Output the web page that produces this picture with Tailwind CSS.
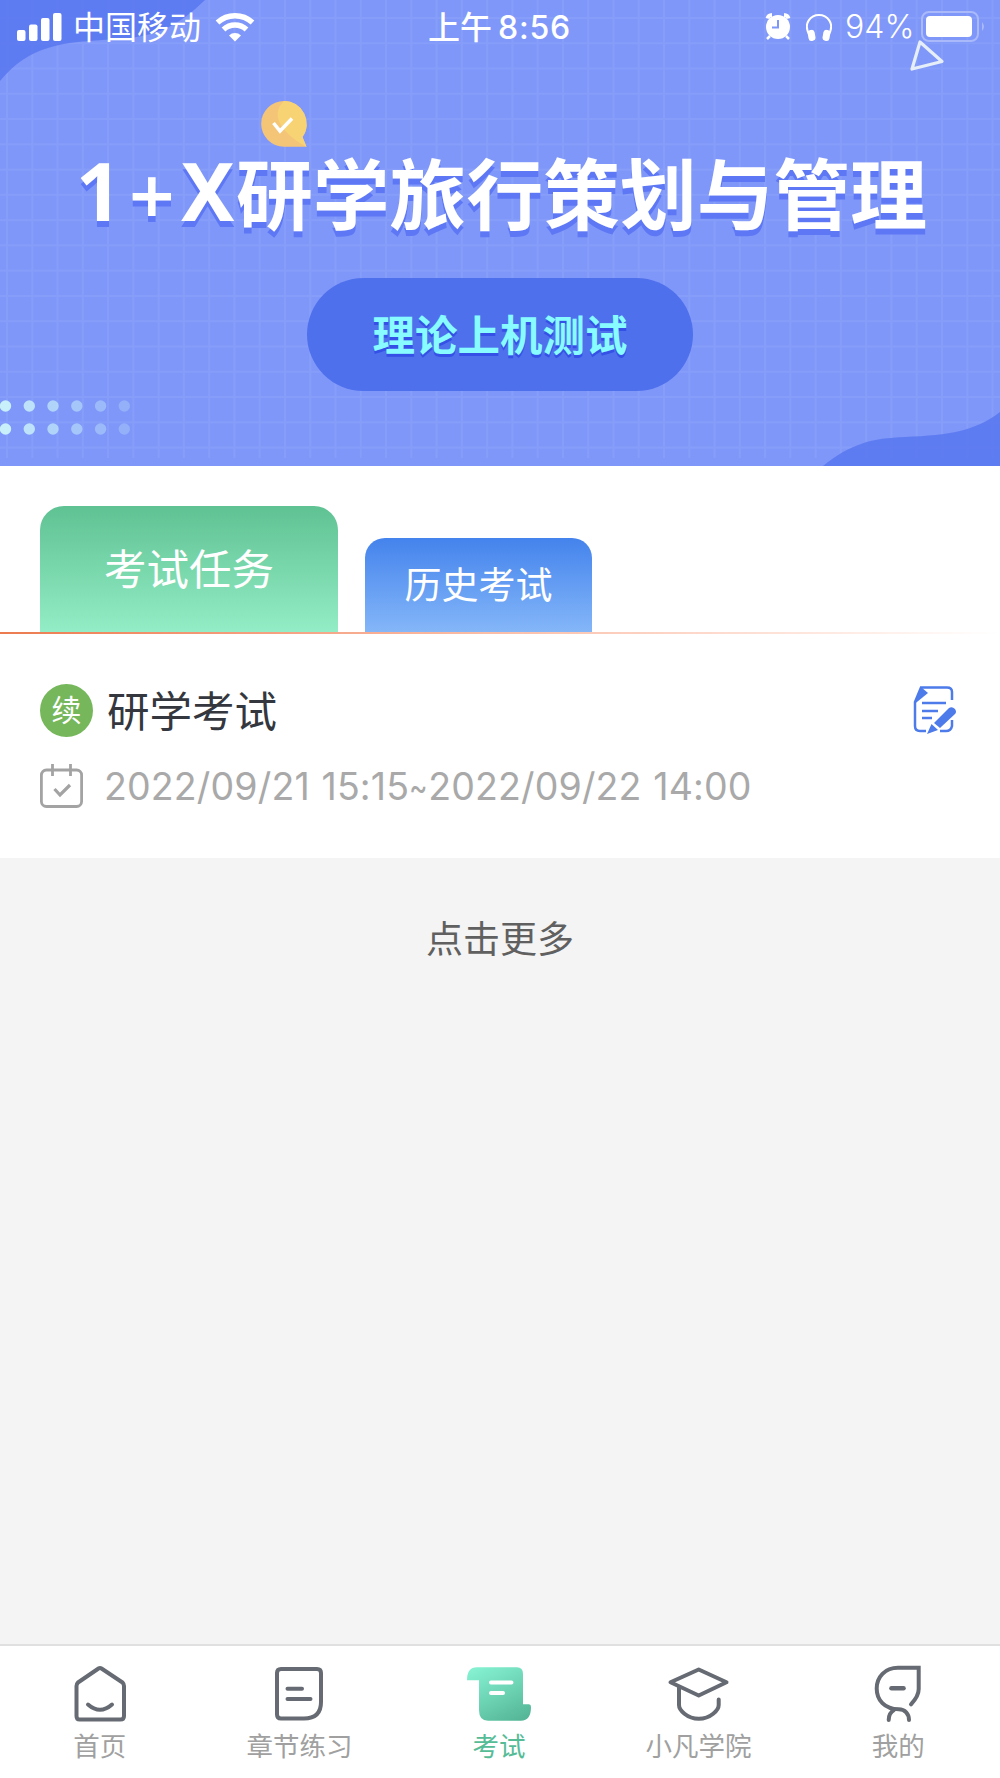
<!DOCTYPE html>
<html lang="zh-CN">
<head>
    <meta charset="UTF-8">
    <meta name="viewport" content="width=device-width, initial-scale=1.0">
    <title>1+X研学旅行策划与管理</title>
    <script src="https://cdn.jsdelivr.net/npm/@tailwindcss/browser@4"></script>
</head>
<body class="bg-[#f4f4f4] font-['Inter','Noto_Sans_CJK_SC',sans-serif]">
    <div id="app" class="flex flex-col w-[1000px] h-[1778px] overflow-hidden">

        <!-- banner -->
        <header class="relative h-[466px] shrink-0 bg-[#7f97f8] overflow-hidden">
            <svg class="absolute inset-0" width="1000" height="466" viewBox="0 0 1000 466" fill="none">
                <defs>
                    <pattern id="grid" x="6" y="17" width="25.27" height="25.27" patternUnits="userSpaceOnUse">
                        <path d="M1 0V25.27M0 1H25.27" stroke="#8ba2fa" stroke-width="2"/>
                    </pattern>
                </defs>
                <rect width="1000" height="458" fill="url(#grid)" opacity="0.6"/>
                <path d="M0 0H205C180 24 160 36 120 39C60 42 30 45 0 81Z" fill="#5c7af0" opacity=".94"/>
                <path d="M823 466C850 444 872 438 905 437C950 435 975 431 1000 412V466Z" fill="#5c7af0" opacity=".94"/>
                <!-- dots -->
                <g fill="#c8f0fb">
                    <g><circle cx="5.500" cy="406" r="5.700"/><circle cx="5.500" cy="429" r="5.700"/></g>
                    <g opacity=".85"><circle cx="29.300" cy="406" r="5.700"/><circle cx="29.300" cy="429" r="5.700"/></g>
                    <g opacity=".68"><circle cx="53" cy="406" r="5.700"/><circle cx="53" cy="429" r="5.700"/></g>
                    <g opacity=".53"><circle cx="76.800" cy="406" r="5.700"/><circle cx="76.800" cy="429" r="5.700"/></g>
                    <g opacity=".4"><circle cx="100.600" cy="406" r="5.700"/><circle cx="100.600" cy="429" r="5.700"/></g>
                    <g opacity=".28"><circle cx="124.300" cy="406" r="5.700"/><circle cx="124.300" cy="429" r="5.700"/></g>
                </g>
                <!-- check bubble -->
                <path d="M284 101A22.800 22.800 0 0 0 284 146.700H306.500L302.500 137A22.800 22.800 0 0 0 284 101Z" fill="#f5c577"/>
                <path d="M284 101C272 112 276 130 306.500 146.700L302.500 137A22.800 22.800 0 0 0 284 101Z" fill="#f8d374"/>
                <path d="M273.500 123L280 131L292 118.500" stroke="#fff" stroke-width="3.500"/>
                <path d="M920 42L942 61.500L912 69Z" stroke="#e6eef8" stroke-width="3.200" stroke-linejoin="round"/>
            </svg>

            <div class="relative flex items-center h-[54px] text-white text-[32px] leading-none">
                <svg class="ml-[17px]" width="45" height="30" viewBox="0 0 45 30" fill="#fff">
                    <rect x="0" y="18" width="8.500" height="11" rx="2"/>
                    <rect x="12" y="12.500" width="8.500" height="16.500" rx="2"/>
                    <rect x="24" y="6" width="8.500" height="23" rx="2"/>
                    <rect x="36" y="1" width="8.500" height="28" rx="2"/>
                </svg>
                <span class="ml-[11px] w-[128px] pt-[2px] whitespace-nowrap">中国移动</span>
                <svg class="ml-[14px]" width="41" height="30" viewBox="0 0 41 30" fill="none" stroke="#fff">
                    <path d="M2.500 10.500A26 26 0 0 1 37.500 10.500" stroke-width="5.500"/>
                    <path d="M8.500 17.500A17 17 0 0 1 31.500 17.500" stroke-width="5.500"/>
                    <path d="M20 29.500L14 23.500A8.500 8.500 0 0 1 26 23.500Z" fill="#fff" stroke="none"/>
                </svg>
                <span class="absolute left-[428px] flex items-center gap-[6px] pt-[2px] font-medium whitespace-nowrap">
                    <span>上午</span><span class="tracking-[0.8px]">8:56</span>
                </span>
                <div class="absolute left-[765px] flex items-center">
                    <svg width="26" height="28" viewBox="0 0 26 28" fill="none">
                        <circle cx="13" cy="14" r="12" fill="#fff"/>
                        <path d="M2.500 5.500A5 5 0 0 1 7 2M19 2A5 5 0 0 1 23.500 5.500" stroke="#fff" stroke-width="4"/>
                        <path d="M5 23L2 26M21 23L24 26" stroke="#fff" stroke-width="2.500"/>
                        <path d="M13 7V14.500H7" stroke="#7f97f8" stroke-width="2"/>
                    </svg>
                    <svg class="ml-[15px]" width="26" height="28" viewBox="0 0 26 28" fill="none">
                        <path d="M3 21C-3 10 5 2 13 2S29 10 23 21" stroke="#fff" stroke-width="2"/>
                        <rect x="2" y="17" width="7" height="11" rx="3" transform="rotate(-10 5 22)" fill="#fff"/>
                        <rect x="17" y="17" width="7" height="11" rx="3" transform="rotate(10 21 22)" fill="#fff"/>
                    </svg>
                    <span class="ml-[13px] w-[70px] text-[32px] font-light whitespace-nowrap">94%</span>
                    <svg class="ml-[6px]" width="64" height="32" viewBox="0 0 64 32" fill="none">
                        <rect x="1" y="1" width="56" height="29" rx="7" stroke="#a9b9fa" stroke-width="2"/>
                        <rect x="5" y="5" width="46" height="21" rx="4" fill="#fff"/>
                        <path d="M61 11Q65 15.500 61 20Z" fill="#a9b9fa"/>
                    </svg>
                </div>
            </div>

            <h1 class="relative flex items-center mt-[87px] ml-[76px] h-[110px] text-white text-[76.800px] leading-none font-bold whitespace-nowrap [text-shadow:0_6px_0_#5e78f5]">
                <span class="w-[53px] pb-[12px] text-[80px] font-['Noto_Sans']">1</span>
                <span class="w-[52px] pb-[4px] text-[80px] font-['Noto_Sans'] font-semibold">+</span>
                <span class="w-[55px] pb-[12px] text-[80px] font-['Noto_Sans']">X</span>
                <span class="pt-[2px]">研学旅行策划与管理</span>
            </h1>

            <div class="relative flex items-center justify-center mt-[27px] mx-auto w-[386px] h-[113px] pt-[4px] rounded-full bg-[#4f70ed] text-[#87fbff] text-[42.500px] leading-none font-bold [text-shadow:0_3px_0_#3450e6]">
                理论上机测试
            </div>
        </header>

        <!-- tabs -->
        <div class="bg-white h-[168px] shrink-0 flex flex-col justify-end">
            <div class="flex items-end pl-10 gap-[27px] text-white leading-none">
                <div class="w-[298px] h-[126px] pt-[3px] rounded-t-[24px] bg-linear-to-b from-[#5fc293] to-[#93edc6] flex items-center justify-center text-[42.500px]">考试任务</div>
                <div class="w-[227px] h-[94px] pt-[1px] rounded-t-[20px] bg-linear-to-b from-[#4483ec] to-[#84b6f8] flex items-center justify-center text-[37px]">历史考试</div>
            </div>
            <div class="h-[2px] bg-linear-to-r from-[#ec7b4f] to-white"></div>
        </div>

        <!-- exam item -->
        <div class="bg-white h-[224px] shrink-0 px-10 pt-[49px]">
            <div class="flex items-center h-[54px]">
                <div class="size-[53px] rounded-full bg-[#76b75b] text-white text-[30px] leading-none flex items-center justify-center">续</div>
                <span class="ml-[14px] pt-[4px] text-[#34373e] text-[42.500px] leading-none">研学考试</span>
                <svg class="ml-auto mr-[3px]" width="44" height="50" viewBox="0 0 44 50" fill="none" stroke="#4d7bea" stroke-width="2.500">
                    <path d="M39 15V7Q39 2.500 34 2.500H8L2 17V41Q2 46 7 46H13"/>
                    <path d="M27 46H33Q38 46 39 41V35"/>
                    <path d="M8 2L15 8L1.500 19Z" fill="#4d7bea" stroke="none"/>
                    <path d="M9 18H33M9 26H25M9 33H19"/>
                    <path d="M21 38L36 23Q39 21 42 24Q44 27 42 29L27 43Z" fill="#4d7bea" stroke="none"/>
                    <path d="M18.500 39L25 45L14 49Z" fill="#4d7bea" stroke="none"/>
                </svg>
            </div>
            <div class="flex items-center mt-[26px] h-[46px]">
                <svg width="43" height="44" viewBox="0 0 43 44" fill="none" stroke="#a3a3a3" stroke-width="2.800">
                    <rect x="1.400" y="6" width="40.200" height="36.500" rx="5"/>
                    <path d="M12.500 0V12M30.500 0V12"/>
                    <path d="M14.500 25L20 31L30 21" stroke-width="3.200"/>
                </svg>
                <span class="ml-[21px] pt-[2px] text-[#a9a9a9] text-[37.500px] tracking-[0.15px] [word-spacing:1px] leading-none whitespace-nowrap">2022/09/21 15:15<span class="inline-block -mx-[3px] scale-x-75">~</span>2022/09/22 14:00</span>
            </div>
        </div>

        <div class="flex-1 pt-[59px] text-center text-[#606060] text-[37px] leading-[46px]">点击更多</div>

        <!-- bottom nav -->
        <nav class="h-[134px] shrink-0 bg-white border-t-2 border-[#e0e0e0] grid grid-cols-5 pt-[16px] pr-[2px] text-[#a0a0a0] text-[26.500px] leading-[38px] text-center">
            <div class="flex flex-col items-center gap-[5px]">
                <svg width="64" height="60" viewBox="0 0 64 60" fill="none" stroke="#666a72" stroke-width="4" stroke-linecap="round" stroke-linejoin="round">
                    <path d="M30.500 6.500Q32 5.500 33.500 6.500L54.500 20.500Q56 22 56 24V54Q56 57.500 52.500 57.500H11.500Q8.500 57.500 8.500 54V24Q8.500 22 10 20.500Z"/>
                    <path d="M20 42.500Q32 53 44 42.500"/>
                </svg>
                <span>首页</span>
            </div>
            <div class="flex flex-col items-center gap-[5px]">
                <svg width="64" height="60" viewBox="0 0 64 60" fill="none" stroke="#666a72" stroke-width="4" stroke-linecap="round">
                    <path d="M14 7H50Q54 7 54 11V40Q54 56.500 37 56.500H14Q10 56.500 10 52.500V11Q10 7 14 7Z"/>
                    <path d="M20.500 26.700H35M20.500 37H43.500"/>
                </svg>
                <span>章节练习</span>
            </div>
            <div class="flex flex-col items-center gap-[5px] text-[#56bc96]">
                <svg width="64" height="60" viewBox="0 0 64 60" fill="none">
                    <defs>
                        <linearGradient id="scroll" x1="0.2" y1="0" x2="0.8" y2="1">
                            <stop offset="0" stop-color="#84f0d0"/>
                            <stop offset="1" stop-color="#55b797"/>
                        </linearGradient>
                    </defs>
                    <path d="M0 18.300Q0 5.300 10 5.300H50Q56 5.300 56 12V42.300H62Q64 42.300 64 45Q64 58.700 54 58.700H21Q12 58.700 12 48V18.300Z" fill="url(#scroll)"/>
                    <path d="M24 20.500H44.500M24 31H36" stroke="#fff" stroke-width="4" stroke-linecap="round"/>
                </svg>
                <span>考试</span>
            </div>
            <div class="flex flex-col items-center gap-[5px]">
                <svg width="64" height="60" viewBox="0 0 64 60" fill="none" stroke="#666a72" stroke-width="4" stroke-linecap="round" stroke-linejoin="round">
                    <path d="M31.700 7.500L59.500 20.300L31.700 33.500L3.500 20.300Z"/>
                    <path d="M12 25V43C12 48 20 56.800 31.800 56.800S51.700 48 51.700 43V37.500"/>
                </svg>
                <span>小凡学院</span>
            </div>
            <div class="flex flex-col items-center gap-[5px]">
                <svg width="64" height="60" viewBox="0 0 64 60" fill="none" stroke="#666a72" stroke-width="4" stroke-linecap="round">
                    <path d="M45 42.300C50 37 52.700 33 52.700 27V5.800H32C19 5.800 10.700 15 10.700 26.500C10.700 38 18.500 47.300 32.700 47.300C39 47.300 43 52 43 58"/>
                    <path d="M28 48C24.500 50 22.700 53 22.700 58"/>
                    <path d="M25.500 26.300H37.500" stroke-width="4.600"/>
                </svg>
                <span>我的</span>
            </div>
        </nav>
    </div>
</body>
</html>
